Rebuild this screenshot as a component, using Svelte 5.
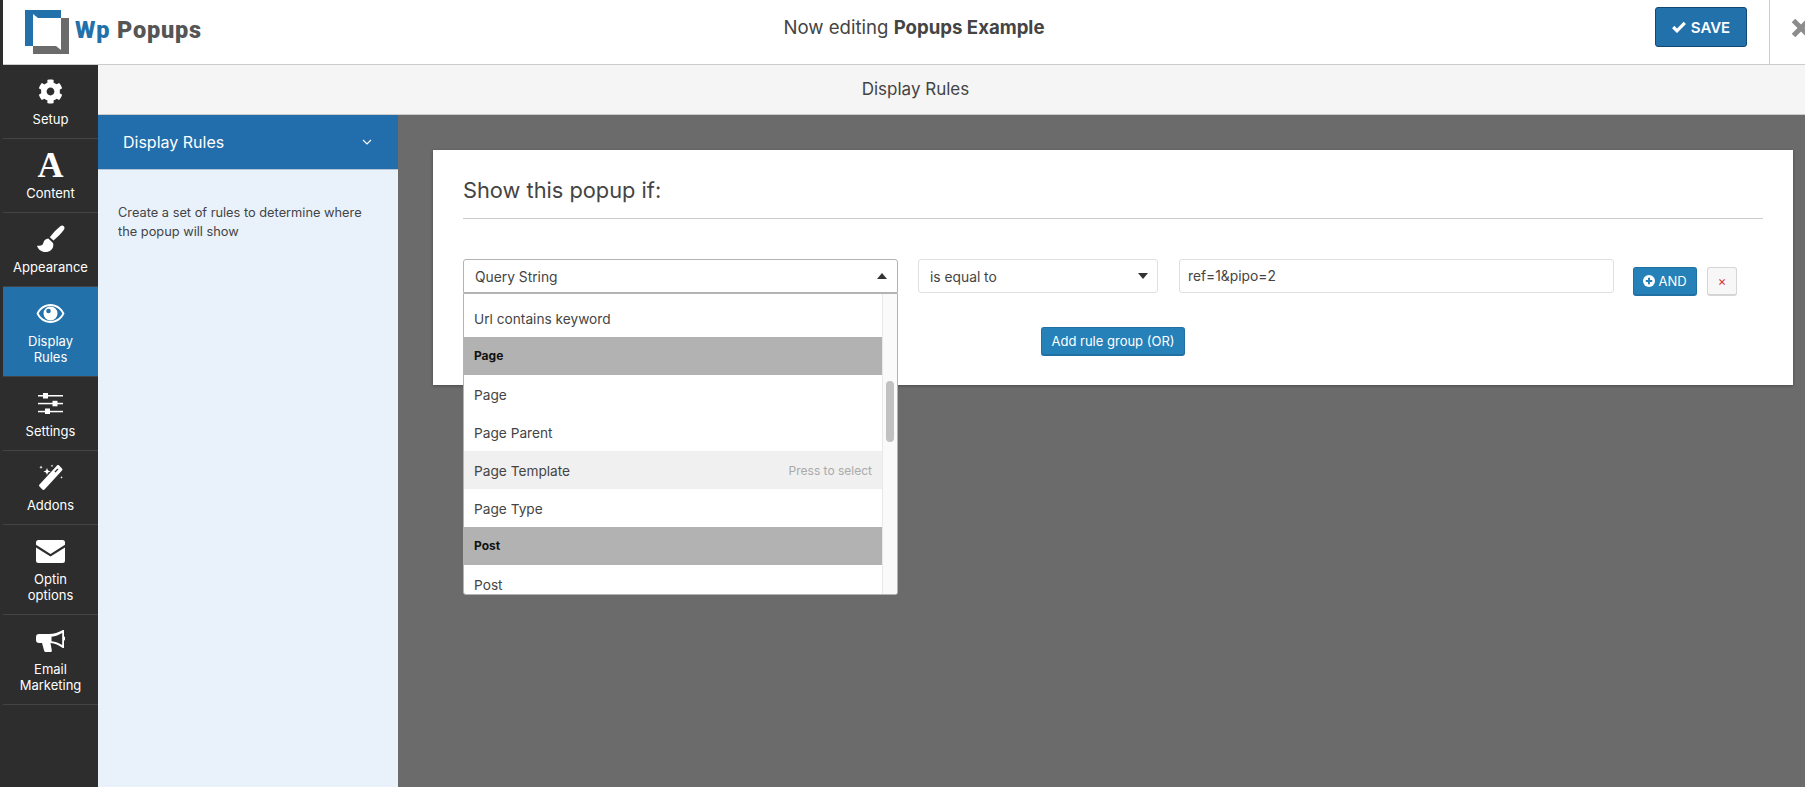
<script>
  const menu = [
    { label: 'Setup', icon: 'gear' },
    { label: 'Content', icon: 'font' },
    { label: 'Appearance', icon: 'brush' },
    { label: 'Display Rules', icon: 'eye', active: true, wrap: true },
    { label: 'Settings', icon: 'sliders' },
    { label: 'Addons', icon: 'wand' },
    { label: 'Optin options', icon: 'mail', wrap: true },
    { label: 'Email Marketing', icon: 'horn', wrap: true }
  ];

  const options = [
    { label: 'Url contains keyword' },
    { label: 'Page', group: true },
    { label: 'Page' },
    { label: 'Page Parent' },
    { label: 'Page Template', hover: true },
    { label: 'Page Type' },
    { label: 'Post', group: true },
    { label: 'Post' }
  ];
</script>

{#snippet icon(name)}
  {#if name === 'gear'}
    <svg width="25" height="25" viewBox="0 0 512 512"><path fill="#fff" d="M487.4 315.7l-42.6-24.6c4.3-23.2 4.3-47 0-70.2l42.6-24.6c4.9-2.8 7.1-8.6 5.5-14-11.1-35.6-30-67.8-54.7-94.6-3.8-4.1-10-5.1-14.8-2.3L380.8 110c-17.9-15.4-38.5-27.3-60.8-35.1V25.8c0-5.6-3.9-10.5-9.4-11.7-36.7-8.2-74.3-7.8-109.2 0-5.5 1.2-9.4 6.1-9.4 11.7V75c-22.2 7.9-42.8 19.8-60.8 35.1L88.7 85.5c-4.9-2.8-11-1.9-14.8 2.3-24.7 26.7-43.6 58.9-54.7 94.6-1.7 5.4.6 11.2 5.5 14L67.3 221c-4.3 23.2-4.3 47 0 70.2l-42.6 24.6c-4.9 2.8-7.1 8.6-5.5 14 11.1 35.6 30 67.8 54.7 94.6 3.8 4.1 10 5.1 14.8 2.3l42.6-24.6c17.9 15.4 38.5 27.3 60.8 35.1v49.2c0 5.6 3.9 10.5 9.4 11.7 36.7 8.2 74.3 7.8 109.2 0 5.5-1.2 9.4-6.1 9.4-11.7v-49.2c22.2-7.9 42.8-19.8 60.8-35.1l42.6 24.6c4.9 2.8 11 1.9 14.8-2.3 24.7-26.7 43.6-58.9 54.7-94.6 1.5-5.5-.7-11.3-5.6-14.1zM256 336c-44.1 0-80-35.9-80-80s35.9-80 80-80 80 35.9 80 80-35.9 80-80 80z"/></svg>
  {:else if name === 'font'}
    <span class="glyph">A</span>
  {:else if name === 'brush'}
    <svg width="29" height="29" viewBox="0 0 29 29"><path fill="#fff" d="M27.800 1.200c-1-.9-2.500-.7-3.500.1-3.800 3-7.300 6.700-10.500 11l3.700 3.300c3.700-3.300 7.400-7 10.400-10.900.8-1.100.8-2.500-.1-3.500zM12.300 13.500c-2.500.3-4.300 1.800-4.900 4.300-.6 2.200-1.900 3.500-6.400 2.900 1 3.800 4.700 6.300 8.300 6.300 4.700 0 8-2.700 8-7 0-.7-.1-1.400-.3-2z"/></svg>
  {:else if name === 'eye'}
    <svg width="29" height="21" viewBox="0 0 29 21"><path fill="#fff" fill-rule="evenodd" d="M14.500 1C8.300 1 3.200 4.700.5 10.500c2.700 5.800 7.800 9.500 14 9.500s11.300-3.700 14-9.500C25.800 4.700 20.700 1 14.500 1zm0 2c4.900 0 9.300 2.800 11.800 7.500-2.500 4.700-6.900 7.500-11.800 7.500S5.200 15.200 2.700 10.500C5.200 5.800 9.600 3 14.500 3z"/><path fill="#fff" fill-rule="evenodd" d="M14.500 3.500a7 7 0 1 0 0 14 7 7 0 0 0 0-14zm-2 2.200a2.300 2.300 0 1 1 0 4.600 2.300 2.300 0 0 1 0-4.600z"/></svg>
  {:else if name === 'sliders'}
    <svg width="25" height="23" viewBox="0 0 25 23" fill="#fff"><rect x="0" y="3" width="25" height="1.500"/><rect x="5" y="1" width="5" height="5.500"/><rect x="0" y="10.800" width="25" height="1.500"/><rect x="14.500" y="8.800" width="5" height="5.500"/><rect x="0" y="18.800" width="25" height="1.500"/><rect x="7" y="16.500" width="5" height="5.500"/></svg>
  {:else if name === 'wand'}
    <svg width="25" height="27" viewBox="0 0 25 27" fill="#fff"><path d="M19 1.500c.6-.6 1.500-.6 2.100 0l2.900 2.900c.6.600.6 1.500 0 2.100L6.500 25.500c-.6.600-1.500.600-2.100 0l-2.900-3c-.6-.6-.6-1.500 0-2.100z"/><path fill="#2d2d2d" d="M16.500 7.500l3-3 .9.900-3 3z"/><path d="M9 4l1 2.500 2.500 1-2.500 1-1 2.500-1-2.500-2.500-1 2.500-1zM3 1.500l.5 1.200 1.200.5-1.200.5-.5 1.200-.5-1.200-1.200-.5 1.200-.5zM14 .5l.4 1 1 .4-1 .4-.4 1-.4-1-1-.4 1-.4zM23.500 12l.4 1 1 .4-1 .4-.4 1-.4-1-1-.4 1-.4z"/></svg>
  {:else if name === 'mail'}
    <svg width="29" height="23" viewBox="0 0 29 23"><path fill="#fff" d="M2.500 0h24A2.500 2.500 0 0 1 29 2.500v2.200L14.500 14 0 4.700V2.500A2.500 2.500 0 0 1 2.500 0zM0 7.500l14.500 9 14.500-9v13a2.500 2.500 0 0 1-2.500 2.500h-24A2.500 2.500 0 0 1 0 20.500z"/></svg>
  {:else if name === 'horn'}
    <svg width="29" height="25" viewBox="0 0 29 25"><path fill="#fff" fill-rule="evenodd" d="M27 1h1v6.300c.8.400 1.300 1.200 1.300 2.200s-.5 1.800-1.300 2.200V19h-1c-.5 0-.8-.3-1-.4-3-2.500-7-4.200-11.500-4.600l1.300 7.500c.1.800-.4 1.500-1.200 1.500H9.500c-.5 0-1-.3-1.200-.8L6 14H3a3 3 0 0 1-3-3V8a3 3 0 0 1 3-3h10c5 0 9.500-1.700 13-3.600.2-.2.600-.4 1-.4zm-.8 3C23 6 19.500 7.300 15.500 7.800v4.400c4 .5 7.500 1.800 10.700 3.800z"/></svg>
  {/if}
{/snippet}

<div class="page">
  <header class="topbar">
    <div class="logo">
      <svg width="44" height="44" viewBox="0 0 44 44">
        <path fill="#2271ab" d="M0 0h36v8H13L8 4v32H0z"/>
        <path fill="#6b6b6b" d="M36 8h8v36H8v-8h23l5 4z"/>
      </svg>
      <span class="brand"><b>Wp</b> Popups</span>
    </div>
    <div class="title">Now editing <strong>Popups Example</strong></div>
    <button class="save">
      <svg width="14" height="12" viewBox="0 0 14 12"><path fill="none" stroke="#fff" stroke-width="3.200" d="M1.200 6l3.800 3.800L12.800 1.800"/></svg>
      SAVE
    </button>
    <div class="close">
      <svg width="20" height="20" viewBox="0 0 20 20"><path stroke="#8c8c8c" stroke-width="5" d="M2.500 2.500l15 15M17.500 2.500l-15 15"/></svg>
    </div>
  </header>

  <div class="body">
    <nav class="sidebar">
      {#each menu as item}
        <a class="item" class:active={item.active} href="#top">
          <span class="ico">{@render icon(item.icon)}</span>
          <span class="lbl" class:wrap={item.wrap}>{item.label}</span>
        </a>
      {/each}
    </nav>

    <div class="main">
      <div class="subbar">Display Rules</div>
      <div class="columns">
        <aside class="panel">
          <div class="panel-head">
            <span>Display Rules</span>
            <svg width="10" height="6" viewBox="0 0 10 6"><path fill="none" stroke="#fff" stroke-width="1.200" d="M1 1l4 4 4-4"/></svg>
          </div>
          <p>Create a set of rules to determine where the popup will show</p>
        </aside>

        <section class="stage">
          <div class="card">
            <h2>Show this popup if:</h2>
            <div class="rule">
              <div class="select first">
                <span>Query String</span>
                <i class="caret up"></i>
                <div class="dropdown">
                  <div class="list">
                    {#each options as o}
                      <div class="opt" class:group={o.group} class:hover={o.hover}>
                        <span>{o.label}</span>
                        {#if o.hover}<em>Press to select</em>{/if}
                      </div>
                    {/each}
                  </div>
                  <div class="track"><div class="thumb"></div></div>
                </div>
              </div>
              <div class="select second">
                <span>is equal to</span>
                <i class="caret"></i>
              </div>
              <input class="value" value="ref=1&pipo=2" />
              <button class="btn and">
                <svg width="12" height="12" viewBox="0 0 12 12"><circle cx="6" cy="6" r="6" fill="#fff"/><path stroke="#2681b8" stroke-width="2" d="M6 2.800v6.400M2.800 6h6.400"/></svg>
                AND
              </button>
              <button class="btn remove">×</button>
            </div>
            <div class="or-row"><button class="btn">Add rule group (OR)</button></div>
          </div>
        </section>
      </div>
    </div>
  </div>
</div>

<style>
  :global(body) { margin: 0; background: #6b6b6b; }

  .page {
    width: 1805px;
    height: 787px;
    overflow: hidden;
    box-sizing: border-box;
    border-left: 3px solid #2d2d2d;
    display: flex;
    flex-direction: column;
    font-family: Inter, "Liberation Sans", sans-serif;
    color: #444;
  }

  .topbar {
    height: 65px;
    flex: none;
    box-sizing: border-box;
    border-bottom: 1px solid #ccc;
    background: #fff;
    display: flex;
    align-items: flex-start;
  }
  .logo { display: flex; align-items: center; gap: 6px; margin: 10px 0 0 22px; width: 400px; }
  .brand { font-family: Roboto, sans-serif; font-weight: 900; font-size: 23.500px; line-height: 44px; color: #555; letter-spacing: .8px; margin-top: -4px; }
  .brand b { color: #2271ab; font-weight: 900; }
  .title { flex: 1; text-align: center; font-size: 18.600px; line-height: 24px; margin-top: 15px; color: #444; padding-right: 252px; }
  .title strong { font-weight: 700; }
  .save {
    width: 92px;
    height: 40px;
    margin: 7px 22px 0 0;
    box-sizing: border-box;
    background: #2271ab;
    border: 1px solid #0f4874;
    border-radius: 3px;
    color: #fff;
    font: 600 15px Inter, sans-serif;
    display: flex;
    align-items: center;
    justify-content: center;
    gap: 5px;
    padding: 0;
  }
  .close {
    width: 36px;
    height: 64px;
    box-sizing: border-box;
    border-left: 1px solid #ccc;
    display: flex;
    align-items: center;
    padding: 0 0 8px 21px;
    overflow: hidden;
  }
  .close svg { flex: none; }

  .body { flex: 1; display: flex; min-height: 0; }

  .sidebar { width: 95px; flex: none; background: #2d2d2d; }
  .item {
    display: flex;
    flex-direction: column;
    align-items: center;
    box-sizing: border-box;
    height: 74px;
    border-bottom: 1px solid #444;
    color: #fff;
    text-decoration: none;
    font-size: 13px;
    padding-top: 12px;
  }
  .item:has(.wrap) { height: 90px; }
  .item.active { background: #2271ab; }
  .ico { height: 28px; display: flex; align-items: center; justify-content: center; }
  .lbl { margin-top: 6px; line-height: 16px; text-align: center; }
  .lbl.wrap { width: 70px; }
  .glyph { font: 700 36px/28px "Liberation Serif", serif; color: #fff; }

  .main { flex: 1; display: flex; flex-direction: column; min-width: 0; }
  .subbar {
    height: 50px;
    flex: none;
    box-sizing: border-box;
    background: #f5f5f5;
    border-bottom: 1px solid #ccc;
    display: flex;
    align-items: center;
    justify-content: center;
    font-size: 17px;
    color: #444;
    padding: 0 72px 2px 0;
  }
  .columns { flex: 1; display: flex; min-height: 0; }
  .panel { width: 300px; flex: none; background: #e9f2fb; }
  .panel-head {
    height: 55px;
    box-sizing: border-box;
    background: #226dab;
    border-bottom: 1px solid #b5c5d5;
    color: #fff;
    font-size: 16px;
    display: flex;
    align-items: center;
    justify-content: space-between;
    padding: 0 26px 0 25px;
  }
  .panel p { margin: 33px 20px 0; font-size: 12.800px; line-height: 19px; color: #444; }

  .stage { flex: 1; background: #6b6b6b; padding: 35px 12px 0 35px; min-width: 0; }
  .card {
    height: 235px;
    box-sizing: border-box;
    background: #fff;
    box-shadow: 0 1px 3px rgba(0,0,0,.3);
    padding: 26px 30px 0;
  }
  h2 {
    margin: 0;
    font-size: 21.800px;
    line-height: 28px;
    font-weight: 400;
    color: #444;
    padding-bottom: 14px;
    border-bottom: 1px solid #ccc;
  }
  .rule { display: flex; align-items: flex-start; margin-top: 40px; }
  .select {
    position: relative;
    height: 34px;
    box-sizing: border-box;
    background: #fff;
    border: 1px solid #e0e0e0;
    border-radius: 3px;
    display: flex;
    align-items: center;
    font-size: 13.800px;
    color: #444;
    justify-content: space-between;
  }
  .select span { padding-top: 1px; }
  .select.first { width: 435px; border-color: #b3b3b3; padding: 0 10px 0 11px; border-radius: 3px 3px 0 0; }
  .select.second { width: 240px; margin-left: 20px; padding: 0 9px 0 11px; }
  .caret { width: 0; height: 0; border: 5px solid transparent; border-top: 6px solid #333; border-bottom: 0; }
  .caret.up { border-top: 0; border-bottom: 6px solid #333; }

  .dropdown {
    position: absolute;
    left: -1px;
    right: -1px;
    top: 33px;
    height: 302px;
    box-sizing: border-box;
    display: flex;
    background: #fff;
    border: 1px solid #b3b3b3;
    border-radius: 0 0 3px 3px;
    overflow: hidden;
    z-index: 5;
  }
  .list { flex: 1; padding-top: 5px; min-width: 0; }
  .opt {
    height: 38px;
    box-sizing: border-box;
    padding: 0 10px;
    display: flex;
    align-items: center;
    justify-content: space-between;
    font-size: 13.700px;
    color: #444;
  }
  .opt.group { background: #b2b2b2; color: #111; font-size: 12px; font-weight: 700; padding-bottom: 2px; }
  .opt.hover { background: #f0f0f0; }
  .opt em { font-style: normal; font-size: 12px; color: #aaa; }
  .track { width: 15px; flex: none; background: #fafafa; border-left: 1px solid #e8e8e8; box-sizing: border-box; padding: 87px 3px 0 3px; }
  .thumb { height: 61px; border-radius: 4px; background: #c1c1c1; }

  .value {
    width: 435px;
    height: 34px;
    margin-left: 21px;
    box-sizing: border-box;
    border: 1px solid #e0e0e0;
    border-radius: 3px;
    padding: 0 8px;
    font: 13.800px Inter, sans-serif;
    color: #444;
    outline: none;
  }
  .btn {
    height: 29px;
    box-sizing: border-box;
    background: #2681b8;
    border: 1px solid #2070a3;
    border-bottom-width: 2px;
    border-radius: 3px;
    color: #fff;
    font: 13px Inter, sans-serif;
    padding: 0 9px;
  }
  .and {
    margin: 8px 0 0 19px;
    width: 64px;
    display: flex;
    align-items: center;
    justify-content: center;
    gap: 3px;
    padding: 0;
  }
  .remove {
    margin: 8px 0 0 10px;
    width: 30px;
    padding: 0;
    background: #f7f7f7;
    border-color: #d5d5d5;
    color: #d9343f;
    font-size: 13px;
  }
  .or-row { display: flex; justify-content: center; margin-top: 31px; width: 1300px; }
</style>
